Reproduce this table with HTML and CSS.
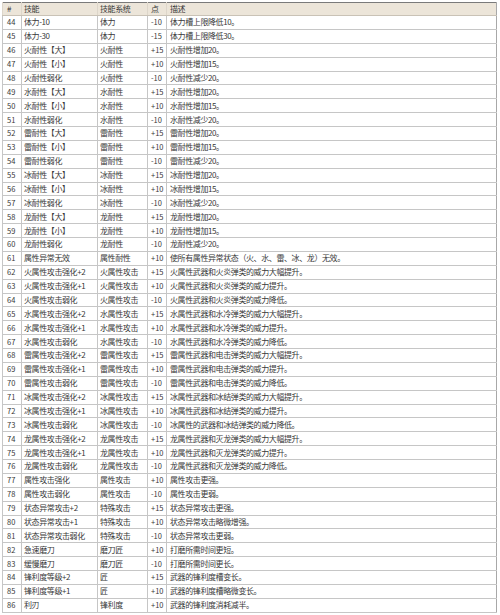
FILE: index.html
```html
<!DOCTYPE html>
<html lang="zh">
<head>
<meta charset="utf-8">
<link rel="stylesheet" href="styles.css">
</head>
<body>
<table class="skills">
<colgroup><col class="w-no"><col class="w-name"><col class="w-sys"><col class="w-pt"><col class="w-desc"></colgroup>
<thead>
<tr><th class="c-no">#</th><th>技能</th><th>技能系统</th><th class="c-pt">点</th><th class="c-desc">描述</th></tr>
</thead>
<tbody>
<tr><td class="c-no">44</td><td>体力-10</td><td>体力</td><td class="c-pt">-10</td><td class="c-desc">体力槽上限降低10。</td></tr>
<tr><td class="c-no">45</td><td>体力-30</td><td>体力</td><td class="c-pt">-15</td><td class="c-desc">体力槽上限降低30。</td></tr>
<tr><td class="c-no">46</td><td>火耐性【大】</td><td>火耐性</td><td class="c-pt">+15</td><td class="c-desc">火耐性增加20。</td></tr>
<tr><td class="c-no">47</td><td>火耐性【小】</td><td>火耐性</td><td class="c-pt">+10</td><td class="c-desc">火耐性增加15。</td></tr>
<tr><td class="c-no">48</td><td>火耐性弱化</td><td>火耐性</td><td class="c-pt">-10</td><td class="c-desc">火耐性减少20。</td></tr>
<tr><td class="c-no">49</td><td>水耐性【大】</td><td>水耐性</td><td class="c-pt">+15</td><td class="c-desc">水耐性增加20。</td></tr>
<tr><td class="c-no">50</td><td>水耐性【小】</td><td>水耐性</td><td class="c-pt">+10</td><td class="c-desc">水耐性增加15。</td></tr>
<tr><td class="c-no">51</td><td>水耐性弱化</td><td>水耐性</td><td class="c-pt">-10</td><td class="c-desc">水耐性减少20。</td></tr>
<tr><td class="c-no">52</td><td>雷耐性【大】</td><td>雷耐性</td><td class="c-pt">+15</td><td class="c-desc">雷耐性增加20。</td></tr>
<tr><td class="c-no">53</td><td>雷耐性【小】</td><td>雷耐性</td><td class="c-pt">+10</td><td class="c-desc">雷耐性增加15。</td></tr>
<tr><td class="c-no">54</td><td>雷耐性弱化</td><td>雷耐性</td><td class="c-pt">-10</td><td class="c-desc">雷耐性减少20。</td></tr>
<tr><td class="c-no">55</td><td>冰耐性【大】</td><td>冰耐性</td><td class="c-pt">+15</td><td class="c-desc">冰耐性增加20。</td></tr>
<tr><td class="c-no">56</td><td>冰耐性【小】</td><td>冰耐性</td><td class="c-pt">+10</td><td class="c-desc">冰耐性增加15。</td></tr>
<tr><td class="c-no">57</td><td>冰耐性弱化</td><td>冰耐性</td><td class="c-pt">-10</td><td class="c-desc">冰耐性减少20。</td></tr>
<tr><td class="c-no">58</td><td>龙耐性【大】</td><td>龙耐性</td><td class="c-pt">+15</td><td class="c-desc">龙耐性增加20。</td></tr>
<tr><td class="c-no">59</td><td>龙耐性【小】</td><td>龙耐性</td><td class="c-pt">+10</td><td class="c-desc">龙耐性增加15。</td></tr>
<tr><td class="c-no">60</td><td>龙耐性弱化</td><td>龙耐性</td><td class="c-pt">-10</td><td class="c-desc">龙耐性减少20。</td></tr>
<tr><td class="c-no">61</td><td>属性异常无效</td><td>属性耐性</td><td class="c-pt">+10</td><td class="c-desc">使所有属性异常状态（火、水、雷、冰、龙）无效。</td></tr>
<tr><td class="c-no">62</td><td>火属性攻击强化+2</td><td>火属性攻击</td><td class="c-pt">+15</td><td class="c-desc">火属性武器和火炎弹类的威力大幅提升。</td></tr>
<tr><td class="c-no">63</td><td>火属性攻击强化+1</td><td>火属性攻击</td><td class="c-pt">+10</td><td class="c-desc">火属性武器和火炎弹类的威力提升。</td></tr>
<tr><td class="c-no">64</td><td>火属性攻击弱化</td><td>火属性攻击</td><td class="c-pt">-10</td><td class="c-desc">火属性武器和火炎弹类的威力降低。</td></tr>
<tr><td class="c-no">65</td><td>水属性攻击强化+2</td><td>水属性攻击</td><td class="c-pt">+15</td><td class="c-desc">水属性武器和水冷弹类的威力大幅提升。</td></tr>
<tr><td class="c-no">66</td><td>水属性攻击强化+1</td><td>水属性攻击</td><td class="c-pt">+10</td><td class="c-desc">水属性武器和水冷弹类的威力提升。</td></tr>
<tr><td class="c-no">67</td><td>水属性攻击弱化</td><td>水属性攻击</td><td class="c-pt">-10</td><td class="c-desc">水属性武器和水冷弹类的威力降低。</td></tr>
<tr><td class="c-no">68</td><td>雷属性攻击强化+2</td><td>雷属性攻击</td><td class="c-pt">+15</td><td class="c-desc">雷属性武器和电击弹类的威力大幅提升。</td></tr>
<tr><td class="c-no">69</td><td>雷属性攻击强化+1</td><td>雷属性攻击</td><td class="c-pt">+10</td><td class="c-desc">雷属性武器和电击弹类的威力提升。</td></tr>
<tr><td class="c-no">70</td><td>雷属性攻击弱化</td><td>雷属性攻击</td><td class="c-pt">-10</td><td class="c-desc">雷属性武器和电击弹类的威力降低。</td></tr>
<tr><td class="c-no">71</td><td>冰属性攻击强化+2</td><td>冰属性攻击</td><td class="c-pt">+15</td><td class="c-desc">冰属性武器和冰结弹类的威力大幅提升。</td></tr>
<tr><td class="c-no">72</td><td>冰属性攻击强化+1</td><td>冰属性攻击</td><td class="c-pt">+10</td><td class="c-desc">冰属性武器和冰结弹类的威力提升。</td></tr>
<tr><td class="c-no">73</td><td>冰属性攻击弱化</td><td>冰属性攻击</td><td class="c-pt">-10</td><td class="c-desc">冰属性的武器和冰结弹类的威力降低。</td></tr>
<tr><td class="c-no">74</td><td>龙属性攻击强化+2</td><td>龙属性攻击</td><td class="c-pt">+15</td><td class="c-desc">龙属性武器和灭龙弹类的威力大幅提升。</td></tr>
<tr><td class="c-no">75</td><td>龙属性攻击强化+1</td><td>龙属性攻击</td><td class="c-pt">+10</td><td class="c-desc">龙属性武器和灭龙弹类的威力提升。</td></tr>
<tr><td class="c-no">76</td><td>龙属性攻击弱化</td><td>龙属性攻击</td><td class="c-pt">-10</td><td class="c-desc">龙属性武器和灭龙弹类的威力降低。</td></tr>
<tr><td class="c-no">77</td><td>属性攻击强化</td><td>属性攻击</td><td class="c-pt">+10</td><td class="c-desc">属性攻击更强。</td></tr>
<tr><td class="c-no">78</td><td>属性攻击弱化</td><td>属性攻击</td><td class="c-pt">-10</td><td class="c-desc">属性攻击更弱。</td></tr>
<tr><td class="c-no">79</td><td>状态异常攻击+2</td><td>特殊攻击</td><td class="c-pt">+15</td><td class="c-desc">状态异常攻击更强。</td></tr>
<tr><td class="c-no">80</td><td>状态异常攻击+1</td><td>特殊攻击</td><td class="c-pt">+10</td><td class="c-desc">状态异常攻击略微增强。</td></tr>
<tr><td class="c-no">81</td><td>状态异常攻击弱化</td><td>特殊攻击</td><td class="c-pt">-10</td><td class="c-desc">状态异常攻击更弱。</td></tr>
<tr><td class="c-no">82</td><td>急速磨刀</td><td>磨刀匠</td><td class="c-pt">+10</td><td class="c-desc">打磨所需时间更短。</td></tr>
<tr><td class="c-no">83</td><td>缓慢磨刀</td><td>磨刀匠</td><td class="c-pt">-10</td><td class="c-desc">打磨所需时间更长。</td></tr>
<tr><td class="c-no">84</td><td>锋利度等级+2</td><td>匠</td><td class="c-pt">+15</td><td class="c-desc">武器的锋利度槽变长。</td></tr>
<tr><td class="c-no">85</td><td>锋利度等级+1</td><td>匠</td><td class="c-pt">+10</td><td class="c-desc">武器的锋利度槽略微变长。</td></tr>
<tr><td class="c-no">86</td><td>利刃</td><td>锋利度</td><td class="c-pt">+10</td><td class="c-desc">武器的锋利度消耗减半。</td></tr>
</tbody>
</table>
</body>
</html>
```

FILE: styles.css
```css
html, body {
  margin: 0;
  padding: 0;
  background: #ffffff;
}

body {
  padding: 2px 0 0 2px;
  font-family: "Noto Sans CJK SC", "Liberation Sans", sans-serif;
  font-size: 8px;
  letter-spacing: -0.4px;
  color: #383838;
}

.skills {
  border-collapse: collapse;
  table-layout: fixed;
  width: 495px;
  border-top: 1px solid #7a7a7a;
  border-left: 1px solid #b8b8b8;
  border-right: 1px solid #a8a8a8;
}

.w-no { width: 19px; }
.w-name { width: 76px; }
.w-sys { width: 50px; }
.w-pt { width: 19px; }
.w-desc { width: auto; }

.skills th,
.skills td {
  padding: 0 0 0 2px;
  height: 12.88px;
  line-height: 12px;
  text-align: left;
  font-weight: normal;
  white-space: nowrap;
  overflow: hidden;
  border-bottom: 1px solid #c6c6c6;
  border-left: 1px solid #c6c6c6;
}

.skills th {
  height: 12px;
  background: #ece5d9;
  border-bottom: 1px solid #c9c2b6;
  border-left: 1px solid #ddd6ca;
}

.skills .c-no {
  padding-left: 4px;
  font-size: 7.5px;
  letter-spacing: 0;
}

.skills .c-pt {
  padding-left: 3px;
  font-size: 7.5px;
  letter-spacing: 0;
}

.skills .c-desc {
  padding-left: 3px;
}

.skills th.c-no,
.skills th.c-pt {
  font-size: 8px;
}
```
